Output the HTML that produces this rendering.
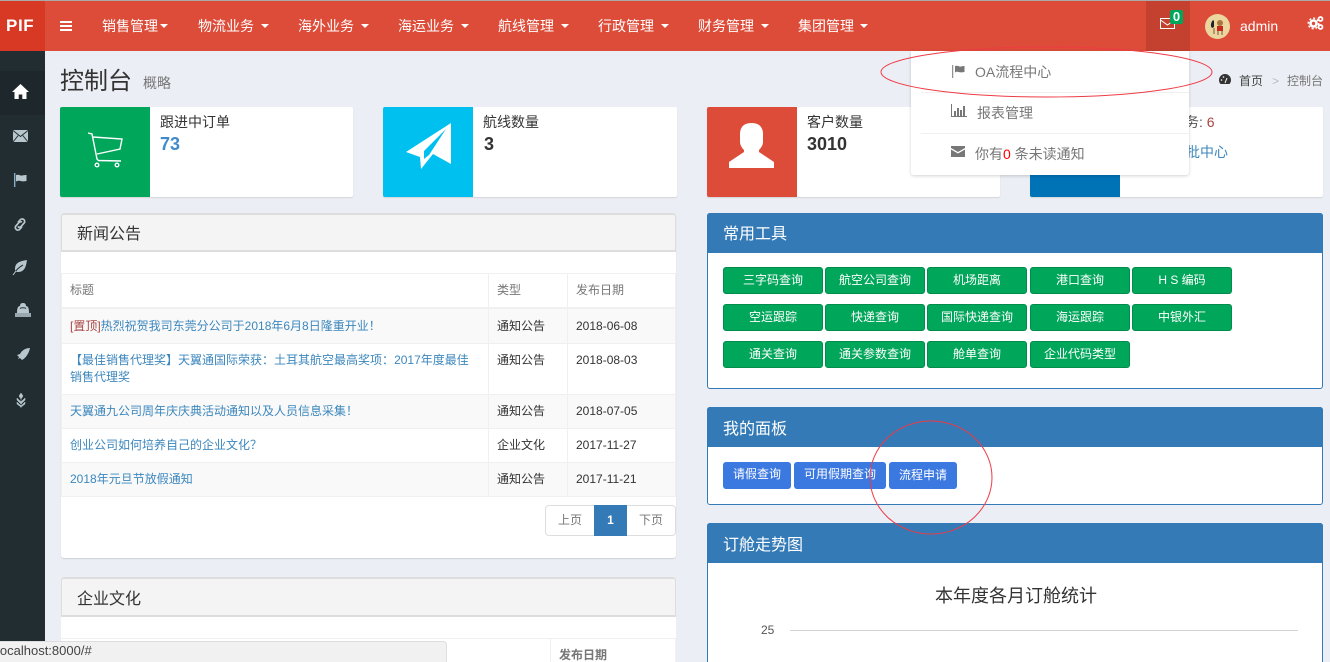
<!DOCTYPE html>
<html lang="zh"><head><meta charset="utf-8"><title>控制台</title>
<style>
*{box-sizing:border-box}
html,body{margin:0;padding:0;width:1330px;height:662px;overflow:hidden;background:#ebeef4}
body{position:relative;font-family:"Liberation Sans","Noto Sans CJK SC",sans-serif;font-size:12px;color:#333}
.a,.t{position:absolute}
.t{white-space:nowrap;line-height:20px}
.nav{color:#fff;font-size:14px;top:16px}
.car{position:absolute;top:24px;width:0;height:0;border:4px solid transparent;border-top-color:#fff;border-bottom:0}
.box{position:absolute;top:107px;height:90px;background:#fff;border-radius:2px;box-shadow:0 1px 1px rgba(0,0,0,.1)}
.ico{position:absolute;left:0;top:0;width:90px;height:90px;border-radius:2px 0 0 2px}
.lab{font-size:14px;color:#333;top:112px}
.num{font-size:18px;font-weight:bold;top:134px}
.pn{position:absolute;background:#fff;border-radius:3px}
.h1{position:absolute;left:0;top:0;right:0;height:39px;background:#f4f4f4;border:1px solid #ddd;border-width:2px 1px 2px 1px;border-radius:3px 3px 0 0}
.h2{position:absolute;left:-1px;top:-1px;right:-1px;height:40px;background:#337ab7;border-radius:3px 3px 0 0}
.lnk{color:#3c87bd}
.p{font-family:"Noto Sans CJK TC",sans-serif}
.g{position:absolute;height:27px;width:100px;background:#00a65a;border:1px solid #008d4c;border-radius:3px;color:#fff;font-size:12px;line-height:24px;text-align:center;white-space:nowrap}
.b{position:absolute;top:462px;height:27px;background:#3b78e0;border-radius:3px;color:#fff;font-size:12px;line-height:25px;text-align:center;white-space:nowrap}
.ln{position:absolute;background:#f0f0f0}
svg{position:absolute;overflow:visible}
</style></head><body>

<!-- top bar -->
<div class="a" style="left:0;top:0;width:1330px;height:1px;background:#aaa"></div>
<div class="a" style="left:0;top:1px;width:1330px;height:50px;background:#dd4b39"></div>
<div class="a" style="left:0;top:1px;width:45px;height:50px;background:#d73925"></div>
<div class="t" style="left:6px;top:16px;color:#fff;font-size:17px;font-weight:bold;letter-spacing:.6px">PIF</div>
<div class="a" style="left:60px;top:21px;width:12px;height:2px;background:#fff"></div>
<div class="a" style="left:60px;top:25px;width:12px;height:2px;background:#fff"></div>
<div class="a" style="left:60px;top:29px;width:12px;height:2px;background:#fff"></div>
<div class="t nav" style="left:102px">销售管理</div><div class="car" style="left:160px"></div>
<div class="t nav" style="left:198px">物流业务</div><div class="car" style="left:261px"></div>
<div class="t nav" style="left:298px">海外业务</div><div class="car" style="left:361px"></div>
<div class="t nav" style="left:398px">海运业务</div><div class="car" style="left:461px"></div>
<div class="t nav" style="left:498px">航线管理</div><div class="car" style="left:561px"></div>
<div class="t nav" style="left:598px">行政管理</div><div class="car" style="left:661px"></div>
<div class="t nav" style="left:698px">财务管理</div><div class="car" style="left:761px"></div>
<div class="t nav" style="left:798px">集团管理</div><div class="car" style="left:860px"></div>

<div class="a" style="left:1146px;top:1px;width:44px;height:50px;background:#c44130"></div>
<svg style="left:1160px;top:18px" width="16" height="12" viewBox="0 0 16 12"><rect x=".5" y=".5" width="14" height="10" fill="none" stroke="#fff"/><path d="M.5 2l7 5 7-5" fill="none" stroke="#fff"/></svg>
<div class="a" style="left:1170px;top:10px;width:13px;height:14px;background:#00a65a;border-radius:2px;color:#fff;font-size:13px;font-weight:bold;text-align:center;line-height:13px">0</div>
<svg style="left:1205px;top:14px" width="25" height="25" viewBox="0 0 25 25"><circle cx="12.5" cy="12.5" r="12.5" fill="#ecd6a0"/><path d="M8 6c-2 2-3 6-1 8l2-1V7z" fill="#222"/><circle cx="15" cy="9" r="3" fill="#a8763e"/><rect x="12" y="12" width="6" height="5" fill="#c9281c"/><path d="M13 17v4M17 17v4M9 14v6" stroke="#7a5a33" fill="none"/></svg>
<div class="t" style="left:1240px;top:16px;color:#fff;font-size:14px">admin</div>
<svg style="left:1308px;top:16px" width="16" height="14" viewBox="0 0 16 14"><circle cx="5.5" cy="7.500" r="3" fill="none" stroke="#fff" stroke-width="2.600"/><circle cx="5.500" cy="7.500" r="5.200" fill="none" stroke="#fff" stroke-width="1.600" stroke-dasharray="2 2"/><circle cx="12.500" cy="3" r="2" fill="none" stroke="#fff" stroke-width="1.800"/><circle cx="12.500" cy="11" r="2" fill="none" stroke="#fff" stroke-width="1.800"/></svg>

<!-- sidebar -->
<div class="a" style="left:0;top:51px;width:45px;height:611px;background:#222d32"></div>
<div class="a" style="left:0;top:71px;width:45px;height:44px;background:#1e282c"></div>
<svg style="left:12px;top:84px" width="17" height="15" viewBox="0 0 17 15"><path d="M8.500 0L0 8h2.500v7h4.200v-4.500h3.600V15h4.200V8H17z" fill="#fff"/></svg>
<svg style="left:13px;top:130px" width="15" height="12" viewBox="0 0 15 12"><rect width="15" height="12" fill="#b8c7ce"/><path d="M0 .5l7.500 6 7.500-6M0 12l5.200-6.500M15 12L9.800 5.500" stroke="#222d32" fill="none"/></svg>
<svg style="left:14px;top:173px" width="13" height="14" viewBox="0 0 13 14"><path d="M.7 0v14" stroke="#8fb6c9" stroke-width="1.300"/><path d="M2 2c3-1 4 1 6 .5s3-.5 4.500-.5v6c-3 .5-4 .5-6 0S3 8 2 8.500z" fill="#b8c7ce"/></svg>
<svg style="left:13px;top:217px" width="14" height="15" viewBox="0 0 14 15"><path d="M6 9.500l-1 1M5 5.500l2-2.500a2.600 2.600 0 0 1 4.500 2.500L8 9.500a2.600 2.600 0 0 1-3 .5M9 5a2.600 2.600 0 0 0-3 .5l-3.500 4a2.600 2.600 0 0 0 4.500 2.500l2-2.500" fill="none" stroke="#b8c7ce" stroke-width="1.700"/></svg>
<svg style="left:13px;top:260px" width="15" height="15" viewBox="0 0 15 15"><path d="M14 0C8 1 2 2 2 9c0 2 1 3 3 3 7 0 8-6 9-12z" fill="#b8c7ce"/><path d="M0 15C3 10 6 7 10 5" stroke="#222d32" fill="none"/><path d="M0 15l3-4" stroke="#b8c7ce" fill="none"/></svg>
<svg style="left:15px;top:303px" width="16" height="14" viewBox="0 0 16 14"><path d="M2 10c0-5 1-7 3-7 0-2 1-3 3-3s3 1 3 3c2 0 3 2 3 7z" fill="#b8c7ce"/><path d="M5 5.500c1-1 5-1 6 0" stroke="#222d32" fill="none"/><rect x="0" y="10" width="16" height="4" fill="#9aa7ad"/></svg>
<svg style="left:17px;top:348px" width="13" height="13" viewBox="0 0 13 13"><path d="M13 0C9 0 5 2 3 6L0 7l2 2-1 2 2-1 2 2c4-2 7-7 8-12z" fill="#b8c7ce"/></svg>
<svg style="left:16px;top:393px" width="10" height="15" viewBox="0 0 10 15"><path d="M5 0l2 3-2 3-2-3zM5 15V5M1 5l4 4 4-4v2L5 11 1 7zM1 9l4 4 4-4v2l-4 3-4-3z" fill="#b8c7ce" stroke="#b8c7ce" stroke-width=".5"/></svg>

<!-- heading -->
<div class="t" style="left:60px;top:72px;font-size:24px;color:#333">控制台</div>
<div class="t" style="left:143px;top:73px;font-size:14px;color:#777">概略</div>
<svg style="left:1219px;top:74px" width="12" height="10" viewBox="0 0 12 10"><path d="M1.500 10A6 6 0 1 1 10.500 10z" fill="#333"/><path d="M6 9l2-5" stroke="#fff"/><circle cx="2.500" cy="6" r=".8" fill="#fff"/><circle cx="4.500" cy="3" r=".8" fill="#fff"/></svg>
<div class="t" style="left:1239px;top:71px;color:#444">首页</div>
<div class="t" style="left:1272px;top:71px;color:#bbb">&gt;</div>
<div class="t" style="left:1287px;top:71px;color:#777">控制台</div>

<!-- info boxes -->
<div class="box" style="left:60px;width:293px"><div class="ico" style="background:#00a65a"></div>
<svg style="left:0;top:0" width="90" height="90" viewBox="0 0 90 90"><path d="M28 26l4 1 5 25 1.500 1.500L61 54M33 30l29 2-2 10-23 5" fill="none" stroke="#fff" stroke-width="1.400"/><circle cx="37" cy="58" r="1.800" fill="none" stroke="#fff" stroke-width="1.400"/><circle cx="57" cy="58" r="1.800" fill="none" stroke="#fff" stroke-width="1.400"/></svg></div>
<div class="box" style="left:383px;width:294px"><div class="ico" style="background:#00c0ef"></div>
<svg style="left:0;top:0" width="90" height="90" viewBox="0 0 90 90"><path d="M68 16L23 45l14 5 1 12 12-15 18 10z" fill="#fff"/><path d="M63 22L41 44v8l5-4z" fill="#00c0ef"/></svg></div>
<div class="box" style="left:707px;width:293px"><div class="ico" style="background:#dd4b39"></div>
<svg style="left:0;top:0" width="90" height="90" viewBox="0 0 90 90"><path d="M44.500 16C52 16 56 20 56 27V35C56 38 54 41 52 43V45L67 55V61H22V55L37 45V43C35 41 33 38 33 35V27C33 20 37 16 44.500 16Z" fill="#fff"/></svg></div>
<div class="box" style="left:1030px;width:293px"><div class="ico" style="background:#0073b7"></div></div>
<div class="t lab" style="left:160px">跟进中订单</div><div class="t num" style="left:160px;color:#428bca">73</div>
<div class="t lab" style="left:483px">航线数量</div><div class="t num" style="left:484px">3</div>
<div class="t lab" style="left:807px">客户数量</div><div class="t num" style="left:807px">3010</div>
<div class="t lab" style="left:1185px;color:#555">务: <span style="color:#a94442">6</span></div>
<div class="t" style="left:1186px;top:142px;font-size:14px;color:#3c87bd">批中心</div>

<!-- news panel -->
<div class="pn" style="left:61px;top:213px;width:615px;height:345px;box-shadow:0 1px 1px rgba(0,0,0,.12)">
<div class="h1"></div>
<div class="ln" style="left:0;top:60px;width:614px;height:1px"></div>
<div class="a" style="left:0;top:95px;width:614px;height:36px;background:#f9f9f9"></div>
<div class="a" style="left:0;top:181px;width:614px;height:34px;background:#f9f9f9"></div>
<div class="a" style="left:0;top:249px;width:614px;height:34px;background:#f9f9f9"></div>
<div class="ln" style="left:0;top:94px;width:614px;height:2px"></div>
<div class="ln" style="left:0;top:130px;width:614px;height:1px"></div>
<div class="ln" style="left:0;top:181px;width:614px;height:1px"></div>
<div class="ln" style="left:0;top:215px;width:614px;height:1px"></div>
<div class="ln" style="left:0;top:249px;width:614px;height:1px"></div>
<div class="ln" style="left:0;top:283px;width:614px;height:1px"></div>
<div class="ln" style="left:427px;top:60px;width:1px;height:224px"></div>
<div class="ln" style="left:506px;top:60px;width:1px;height:224px"></div>
<div class="ln" style="left:0;top:60px;width:1px;height:224px"></div>
<div class="ln" style="left:614px;top:60px;width:1px;height:224px"></div>
</div>
<div class="t" style="left:77px;top:225px;font-size:16px">新闻公告</div>
<div class="t" style="left:70px;top:280px;color:#777">标题</div>
<div class="t" style="left:497px;top:280px;color:#777">类型</div>
<div class="t" style="left:576px;top:280px;color:#777">发布日期</div>
<div class="t lnk" style="left:70px;top:316px"><span style="color:#a94442">[置顶]</span>热烈祝贺我司东莞分公司于2018年6月8日隆重开业<span class="p">！</span></div>
<div class="t" style="left:497px;top:316px">通知公告</div><div class="t" style="left:576px;top:316px">2018-06-08</div>
<div class="t lnk" style="left:70px;top:350px">【最佳销售代理奖】天翼通国际荣获<span class="p">：</span>土耳其航空最高奖项<span class="p">：</span>2017年度最佳</div>
<div class="t lnk" style="left:70px;top:367px">销售代理奖</div>
<div class="t" style="left:497px;top:350px">通知公告</div><div class="t" style="left:576px;top:350px">2018-08-03</div>
<div class="t lnk" style="left:70px;top:401px">天翼通九公司周年庆庆典活动通知以及人员信息采集<span class="p">！</span></div>
<div class="t" style="left:497px;top:401px">通知公告</div><div class="t" style="left:576px;top:401px">2018-07-05</div>
<div class="t lnk" style="left:70px;top:435px">创业公司如何培养自己的企业文化<span class="p">？</span></div>
<div class="t" style="left:497px;top:435px">企业文化</div><div class="t" style="left:576px;top:435px">2017-11-27</div>
<div class="t lnk" style="left:70px;top:469px">2018年元旦节放假通知</div>
<div class="t" style="left:497px;top:469px">通知公告</div><div class="t" style="left:576px;top:469px">2017-11-21</div>
<div class="a" style="left:545px;top:505px;width:131px;height:31px;border:1px solid #ddd;border-radius:4px;background:#fff"></div>
<div class="a" style="left:594px;top:505px;width:33px;height:31px;background:#337ab7;color:#fff;font-weight:bold;text-align:center;line-height:30px">1</div>
<div class="t" style="left:558px;top:510px;color:#777">上页</div>
<div class="t" style="left:639px;top:510px;color:#777">下页</div>

<!-- culture panel -->
<div class="pn" style="left:61px;top:577px;width:615px;height:90px">
<div class="h1" style="height:40px"></div>
<div class="ln" style="left:0;top:61px;width:614px;height:1px"></div>
<div class="ln" style="left:489px;top:61px;width:1px;height:30px"></div>
<div class="ln" style="left:614px;top:61px;width:1px;height:30px"></div>
</div>
<div class="t" style="left:77px;top:590px;font-size:16px">企业文化</div>
<div class="t" style="left:559px;top:645px;color:#777;font-weight:bold">发布日期</div>

<!-- tools -->
<div class="pn" style="left:707px;top:213px;width:616px;height:176px;border:1px solid #337ab7"><div class="h2"></div></div>
<div class="t" style="left:723px;top:225px;font-size:16px;color:#fff">常用工具</div>
<div class="g" style="left:723px;top:267px">三字码查询</div>
<div class="g" style="left:825px;top:267px">航空公司查询</div>
<div class="g" style="left:927px;top:267px">机场距离</div>
<div class="g" style="left:1030px;top:267px">港口查询</div>
<div class="g" style="left:1132px;top:267px">H S 编码</div>
<div class="g" style="left:723px;top:304px">空运跟踪</div>
<div class="g" style="left:825px;top:304px">快递查询</div>
<div class="g" style="left:927px;top:304px">国际快递查询</div>
<div class="g" style="left:1030px;top:304px">海运跟踪</div>
<div class="g" style="left:1132px;top:304px">中银外汇</div>
<div class="g" style="left:723px;top:341px">通关查询</div>
<div class="g" style="left:825px;top:341px">通关参数查询</div>
<div class="g" style="left:927px;top:341px">舱单查询</div>
<div class="g" style="left:1030px;top:341px">企业代码类型</div>

<!-- my panel -->
<div class="pn" style="left:707px;top:407px;width:616px;height:98px;border:1px solid #337ab7"><div class="h2"></div></div>
<div class="t" style="left:723px;top:420px;font-size:16px;color:#fff">我的面板</div>
<div class="b" style="left:723px;width:68px">请假查询</div>
<div class="b" style="left:794px;width:92px">可用假期查询</div>
<div class="b" style="left:889px;width:68px;line-height:27px">流程申请</div>

<!-- chart -->
<div class="pn" style="left:707px;top:523px;width:616px;height:150px;border:1px solid #337ab7"><div class="h2"></div></div>
<div class="t" style="left:723px;top:536px;font-size:16px;color:#fff">订舱走势图</div>
<div class="t" style="left:935px;top:586px;font-size:18px;color:#333">本年度各月订舱统计</div>
<div class="t" style="left:761px;top:620px;font-size:12px;color:#555">25</div>
<div class="a" style="left:790px;top:630px;width:508px;height:1px;background:#d3d3d3"></div>

<!-- dropdown -->
<div class="a" style="left:911px;top:51px;width:278px;height:124px;background:#fff;border-radius:0 0 3px 3px;box-shadow:0 1px 3px rgba(0,0,0,.18)"></div>
<div class="ln" style="left:921px;top:92px;width:268px;height:1px"></div>
<div class="ln" style="left:921px;top:133px;width:268px;height:1px"></div>
<svg style="left:952px;top:65px" width="13" height="13" viewBox="0 0 13 13"><path d="M.7 0v13" stroke="#777"/><path d="M3 1c3-1 4 1 6 .5s2.500-.5 3.500-.5v6c-3 .5-4 .5-6 0S4 7 3 7.500z" fill="#777"/></svg>
<div class="t" style="left:975px;top:62px;font-size:14px;color:#777">OA流程中心</div>
<svg style="left:951px;top:104px" width="16" height="13" viewBox="0 0 16 13"><path d="M.5 0v12.500H16" stroke="#777" fill="none"/><path d="M3 7h2v5H3zM6 4h2v8H6zM9 6h2v6H9zM12 2h2v10h-2z" fill="#777"/></svg>
<div class="t" style="left:977px;top:103px;font-size:14px;color:#777">报表管理</div>
<svg style="left:951px;top:146px" width="14" height="11" viewBox="0 0 14 11"><path d="M0 0h14v2L7 6 0 2zM0 3.500l7 4 7-4V11H0z" fill="#777"/></svg>
<div class="t" style="left:975px;top:144px;font-size:14px;color:#777">你有<span style="color:#f00">0</span> 条未读通知</div>

<!-- red annotations -->
<svg style="left:0;top:0;pointer-events:none" width="1330" height="662"><ellipse cx="1046.500" cy="72" rx="165.500" ry="25" fill="none" stroke="#ee3b45" stroke-width="1"/><ellipse cx="931" cy="477.500" rx="61" ry="56.500" fill="none" stroke="#ee3b45" stroke-width="1"/></svg>

<!-- status bar -->
<div class="a" style="left:-4px;top:641px;width:451px;height:24px;background:#f1f1f1;border:1px solid #ddd;border-radius:0 4px 0 0"></div>
<div class="t" style="left:-3px;top:641px;color:#444;font-size:13px">localhost:8000/#</div>
</body></html>
